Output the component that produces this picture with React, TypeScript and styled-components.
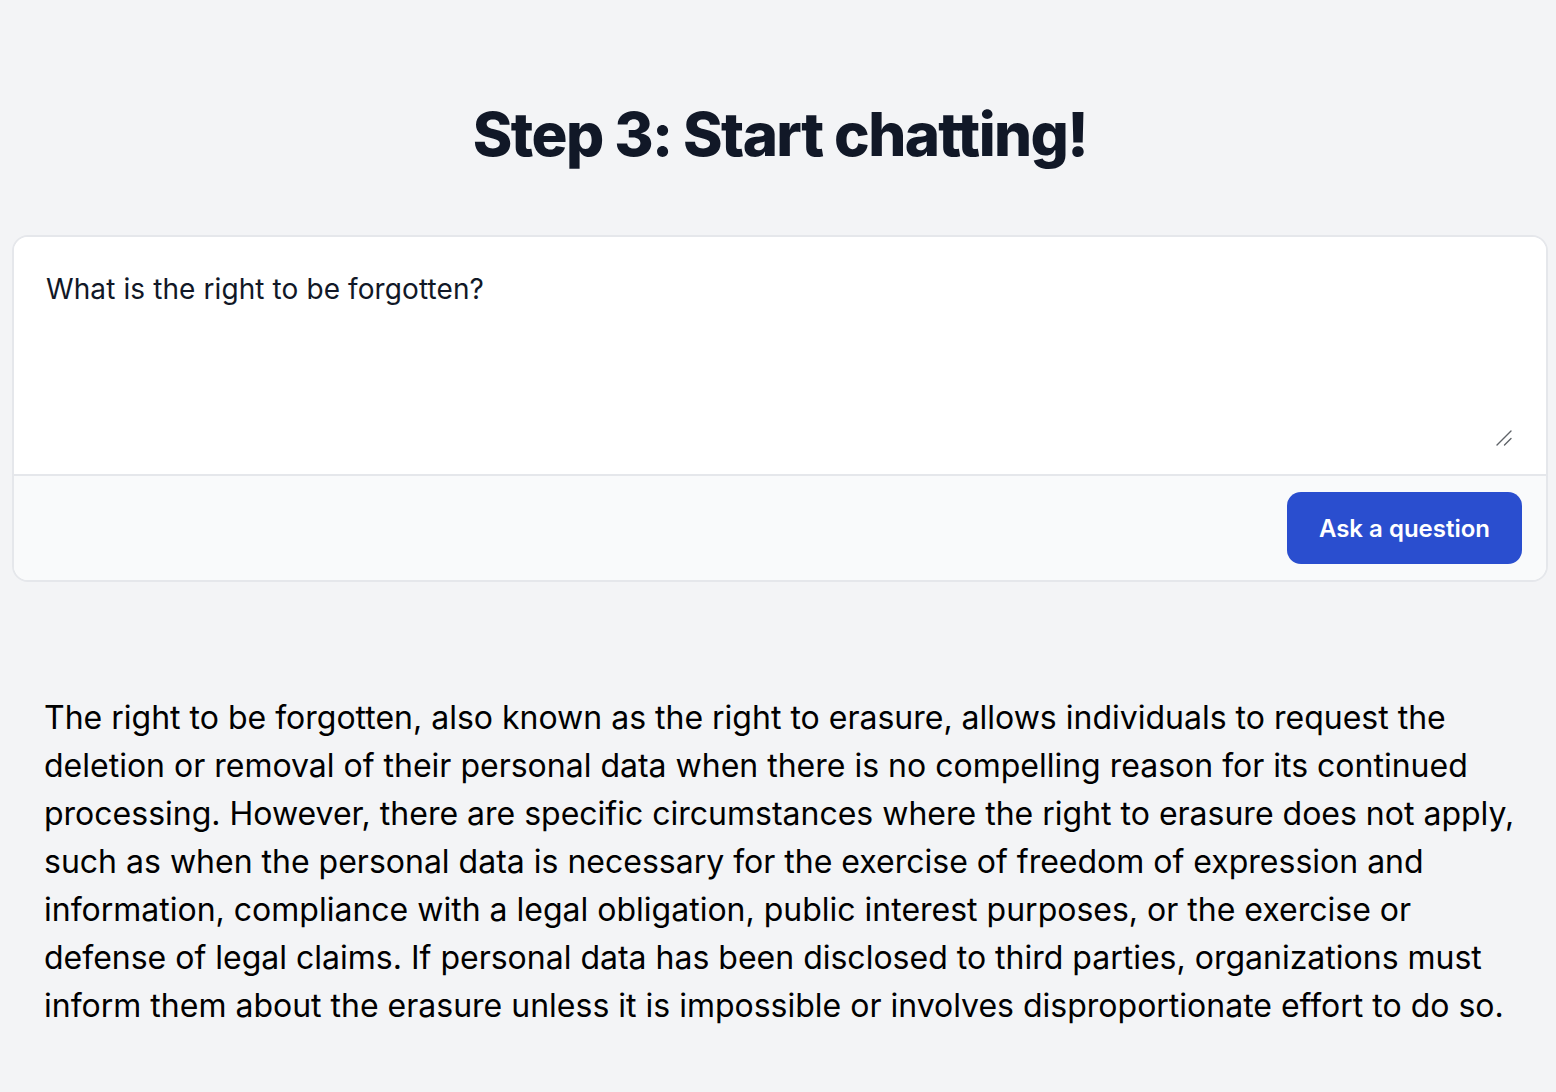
import React, { useState } from "react";
import styled, { createGlobalStyle } from "styled-components";

const GlobalStyle = createGlobalStyle`
  html, body {
    margin: 0;
    padding: 0;
    background: #f3f4f6;
    font-family: Inter, "Noto Sans", Arial, sans-serif;
  }
  * { box-sizing: border-box; }
`;

const Page = styled.main`
  min-height: 1092px;
  padding: 104px 8px 40px 12px;
  display: flex;
  flex-direction: column;
`;

const Title = styled.h1`
  margin: 0 0 71px;
  text-align: center;
  font-size: 60px;
  line-height: 60px;
  font-weight: 800;
  letter-spacing: -1.6px;
  color: #111827;
`;

const Card = styled.form`
  display: flex;
  flex-direction: column;
  background: #ffffff;
  border: 2px solid #e5e7eb;
  border-radius: 16px;
  overflow: hidden;
`;

const InputArea = styled.div`
  position: relative;
  padding: 35px 34px 28px 32px;
  background: #ffffff;
  border-bottom: 2px solid #e5e7eb;
`;

const QuestionInput = styled.textarea`
  display: block;
  width: 100%;
  height: 174px;
  margin: 0;
  padding: 0;
  border: none;
  outline: none;
  resize: none;
  font-family: Inter, "Noto Sans", Arial, sans-serif;
  font-size: 28px;
  line-height: 34px;
  letter-spacing: 0.1px;
  color: #111827;
  background: #ffffff;
`;

const Grip = styled.svg`
  position: absolute;
  right: 34px;
  bottom: 28px;
  width: 16px;
  height: 16px;
  pointer-events: none;
`;

const Footer = styled.div`
  display: flex;
  justify-content: flex-end;
  align-items: center;
  padding: 16px 24px 16px;
  background: #f9fafb;
`;

const AskButton = styled.button`
  height: 72px;
  padding: 0 32px;
  border: none;
  border-radius: 14px;
  background: #2a4ecf;
  color: #ffffff;
  font-family: Inter, "Noto Sans", Arial, sans-serif;
  font-size: 24px;
  font-weight: 600;
  cursor: pointer;
`;

const Answer = styled.p`
  margin: 112px 0 0;
  padding: 0 28px 0 32px;
  font-size: 32px;
  line-height: 48px;
  letter-spacing: 0;
  color: #000000;
`;

export default function App() {
  const [q, setQ] = useState("What is the right to be forgotten?");
  return (
    <>
      <GlobalStyle />
      <Page>
        <Title>Step 3: Start chatting!</Title>
        <Card onSubmit={(e) => e.preventDefault()}>
          <InputArea>
            <QuestionInput value={q} onChange={(e) => setQ(e.target.value)} />
            <Grip viewBox="0 0 16 16" aria-hidden="true">
              <path d="M1 15 L15 1 M8.5 15 L15 8.5" stroke="#5f6368" strokeWidth="1.4" strokeLinecap="round" fill="none" />
            </Grip>
          </InputArea>
          <Footer>
            <AskButton type="submit">Ask a question</AskButton>
          </Footer>
        </Card>
        <Answer>
          The right to be forgotten, also known as the right to erasure, allows individuals to request the deletion or
          removal of their personal data when there is no compelling reason for its continued processing. However,
          there are specific circumstances where the right to erasure does not apply, such as when the personal data is
          necessary for the exercise of freedom of expression and information, compliance with a legal obligation,
          public interest purposes, or the exercise or defense of legal claims. If personal data has been disclosed to
          third parties, organizations must inform them about the erasure unless it is impossible or involves
          disproportionate effort to do so.
        </Answer>
      </Page>
    </>
  );
}
